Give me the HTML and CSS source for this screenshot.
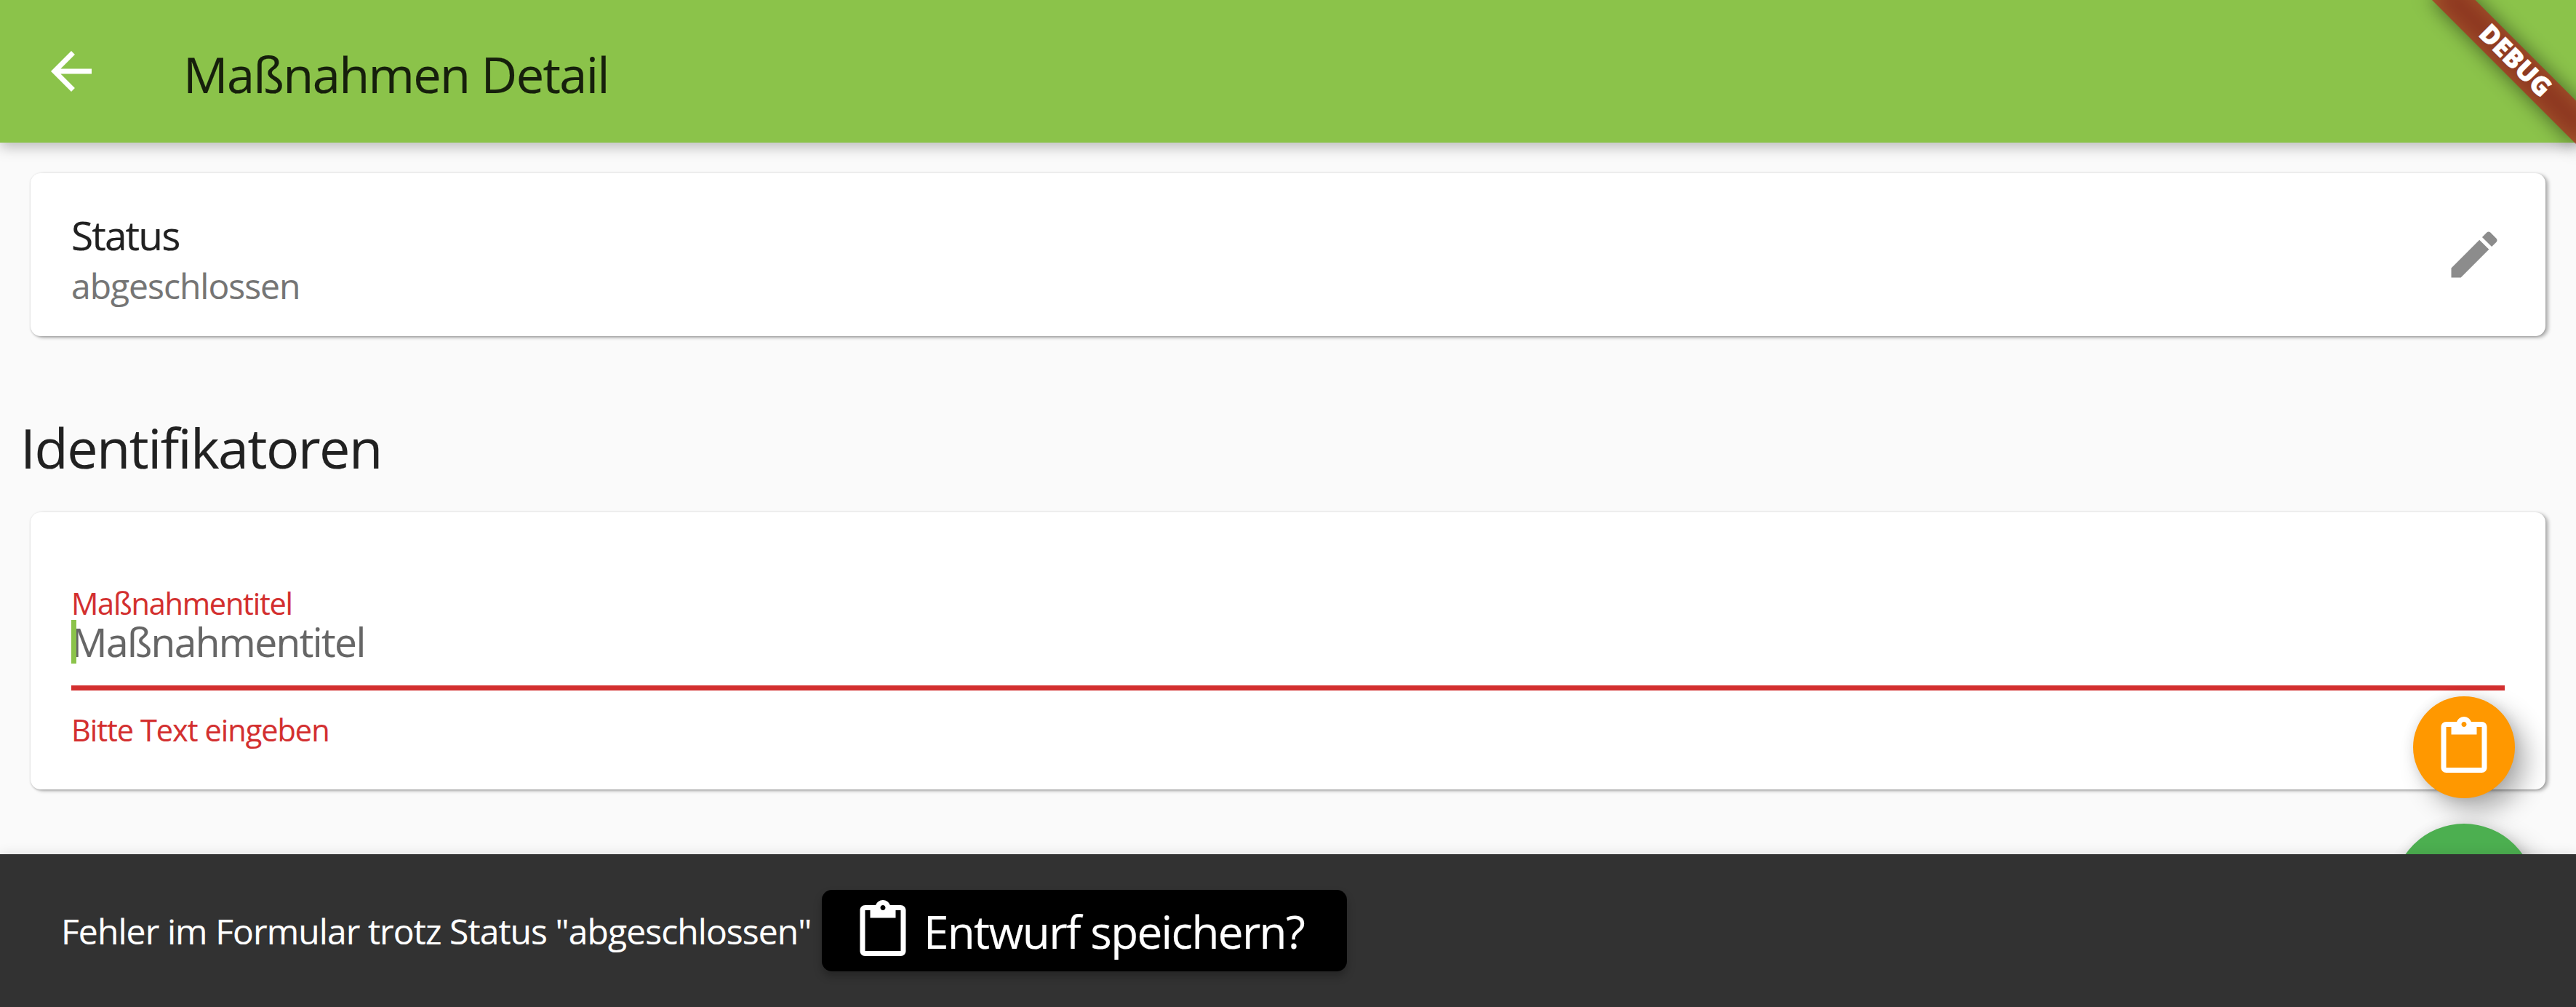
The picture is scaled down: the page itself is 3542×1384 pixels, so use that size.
FILE: index.html
```html
<!DOCTYPE html>
<html lang="de">
<head>
<meta charset="utf-8">
<title>Maßnahmen Detail</title>
<link rel="stylesheet" href="styles.css">
</head>
<body>
<div class="app">
  <header class="app-bar">
    <svg class="icon" viewBox="0 0 24 24"><path d="M20 11H7.83l5.59-5.59L12 4l-8 8 8 8 1.41-1.41L7.83 13H20v-2z"/></svg>
    <h1 class="title">Maßnahmen Detail</h1>
  </header>
  <main class="content">
    <section class="card status-card">
      <div class="status">
        <div class="status-title">Status</div>
        <div class="status-value">abgeschlossen</div>
      </div>
      <svg class="icon edit" viewBox="0 0 24 24"><path d="M3 17.25V21h3.75L17.81 9.94l-3.75-3.75L3 17.25zM20.71 7.04c.39-.39.39-1.02 0-1.41l-2.34-2.34c-.39-.39-1.02-.39-1.41 0l-1.83 1.83 3.75 3.75 1.83-1.83z"/></svg>
    </section>
    <h2 class="section-title">Identifikatoren</h2>
    <section class="card form-card">
      <div class="label">Maßnahmentitel</div>
      <div class="field">Maßnahmentitel<i class="caret"></i></div>
      <div class="error">Bitte Text eingeben</div>
    </section>
  </main>
  <div class="fab fab-draft"><svg class="icon" viewBox="0 0 24 24"><path d="M19 2h-4.18C14.4.84 13.3 0 12 0S9.6.84 9.18 2H5c-1.1 0-2 .9-2 2v16c0 1.1.9 2 2 2h14c1.1 0 2-.9 2-2V4c0-1.1-.9-2-2-2zm-7 0c.55 0 1 .45 1 1s-.45 1-1 1-1-.45-1-1 .45-1 1-1zm7 18H5V4h2v3h10V4h2v16z"/></svg></div>
  <div class="fab fab-save"></div>
  <footer class="snackbar">
    <span class="message">Fehler im Formular trotz Status "abgeschlossen"</span>
    <button class="action">
      <svg class="icon" viewBox="0 0 24 24"><path d="M19 2h-4.18C14.4.84 13.3 0 12 0S9.6.84 9.18 2H5c-1.1 0-2 .9-2 2v16c0 1.1.9 2 2 2h14c1.1 0 2-.9 2-2V4c0-1.1-.9-2-2-2zm-7 0c.55 0 1 .45 1 1s-.45 1-1 1-1-.45-1-1 .45-1 1-1zm7 18H5V4h2v3h10V4h2v16z"/></svg>
      <span class="action-text">Entwurf speichern?</span>
    </button>
  </footer>
  <div class="banner"><div class="banner-shadow"></div><div class="banner-band">DEBUG</div></div>
</div>
</body>
</html>
```
FILE: styles.css
```css
* { box-sizing: border-box; }
body { margin: 0; }
.app {
  position: relative;
  width: 3542px;
  height: 1384px;
  overflow: hidden;
  background: #fafafa;
  color: #212121;
  font-family: "Open Sans", "Noto Sans", sans-serif;
  -webkit-text-stroke: .15px currentColor;
}
h1, h2 { margin: 0; font-weight: 400; }
.icon { width: 84px; height: 84px; flex: none; display: block; fill: #fff; }

.app-bar {
  position: relative;
  display: flex;
  align-items: center;
  gap: 112px;
  height: 196px;
  padding-left: 56px;
  background: #8bc34a;
  box-shadow: 0 6px 18px rgba(0, 0, 0, .26);
}
.title { padding-top: 7px; font-size: 68.5px; line-height: 90px; letter-spacing: -1.65px; color: #161f0c; }

.content { padding: 42px 42px 0; }
.card {
  border-radius: 14px;
  background: #fff;
  box-shadow: 4px 2px 5px rgba(0, 0, 0, .28), 0 1px 3px rgba(0, 0, 0, .2);
}
.status-card {
  display: flex;
  align-items: center;
  justify-content: space-between;
  height: 224px;
  padding: 0 56px;
}
.status { align-self: flex-start; padding-top: 50px; }
.status-title { font-size: 55px; line-height: 70px; letter-spacing: -1.9px; }
.status-value { font-size: 48px; line-height: 70px; letter-spacing: -1px; color: #757575; }
.edit { fill: #8c8c8c; }
.section-title { margin: 103px 0 39px -14px; font-size: 75.5px; line-height: 100px; letter-spacing: -1.55px; }

.form-card { height: 381px; padding: 104px 56px 0; }
.label { font-size: 41.5px; line-height: 43.5px; letter-spacing: -1.25px; color: #d32f2f; }
.field {
  position: relative;
  padding-bottom: 30px;
  border-bottom: 7px solid #d32f2f;
  font-size: 55px;
  line-height: 60px;
  letter-spacing: -1.57px;
  color: #666;
}
.caret { position: absolute; left: 0; top: 0; width: 7px; height: 60px; background: #8bc34a; }
.error { margin-top: 29.5px; font-size: 41.5px; line-height: 50px; letter-spacing: -1px; color: #d32f2f; }

.fab {
  position: absolute;
  display: flex;
  align-items: center;
  justify-content: center;
  border-radius: 50%;
  box-shadow: 16px 17px 34px rgba(0, 0, 0, .3), 0 0 16px rgba(0, 0, 0, .1);
}
.fab-draft { left: 3318px; top: 957px; width: 140px; height: 140px; background: #ff9800; }
.fab-save { left: 3290px; top: 1132px; width: 196px; height: 196px; background: #4caf50; }

.snackbar {
  position: absolute;
  left: 0;
  right: 0;
  bottom: 0;
  display: flex;
  align-items: center;
  height: 210px;
  padding-left: 84px;
  background: #323232;
  color: #fff;
  box-shadow: 0 0 16px rgba(0, 0, 0, .12);
}
.message { width: 1046px; padding-top: 2px; font-size: 48px; line-height: 68px; letter-spacing: -.92px; white-space: nowrap; }
.action {
  display: flex;
  align-items: center;
  gap: 14px;
  width: 722px;
  height: 112px;
  padding: 0 0 0 42px;
  border: 0;
  border-radius: 14px;
  background: #000;
  color: #fff;
  font: 400 62px/84px "Open Sans", "Noto Sans", sans-serif;
  letter-spacing: -1.7px;
  white-space: nowrap;
  box-shadow: 0 7px 12px rgba(0, 0, 0, .25);
}
.action-text { padding-top: 2px; }

/* Ribbon rotated around the top-right corner of the window */
.banner {
  position: absolute;
  left: 3402px;
  top: 98px;
  width: 280px;
  height: 42px;
  transform-origin: 140px -98px;
  transform: rotate(45deg);
}
.banner-shadow { position: absolute; inset: 0; background: rgba(0, 0, 0, .5); filter: blur(14px); }
.banner-band {
  position: absolute;
  inset: 0;
  background: rgba(183, 28, 28, .627);
  color: #fff;
  font-size: 35.7px;
  font-weight: 800;
  line-height: 36px;
  text-align: center;
  -webkit-text-stroke: .5px #fff;
}
```
